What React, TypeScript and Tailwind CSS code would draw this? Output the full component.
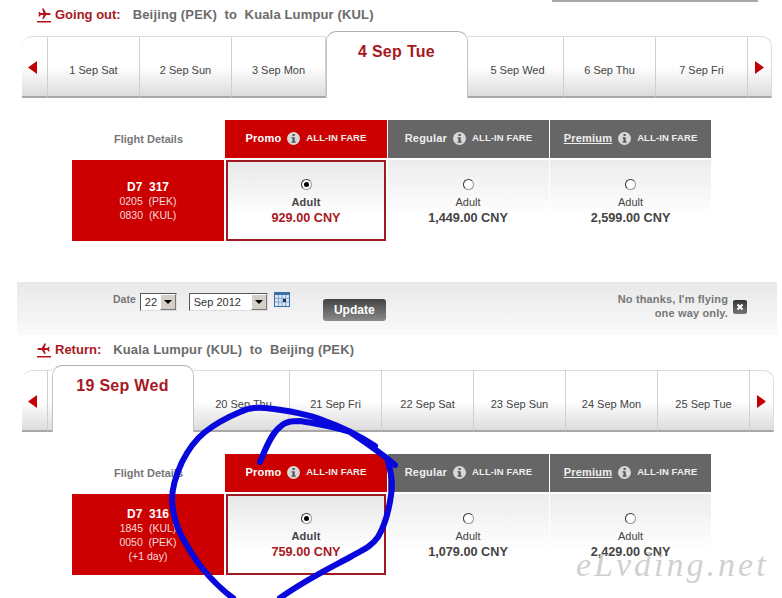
const outDays = [
  { label: "1 Sep Sat", w: "w-[92px]" },
  { label: "2 Sep Sun", w: "w-[92px]" },
  { label: "3 Sep Mon", w: "w-[94px]" },
  { label: "4 Sep Tue", w: "w-[142px]", selected: true },
  { label: "5 Sep Wed", w: "w-[96px]", afterSelected: true },
  { label: "6 Sep Thu", w: "w-[92px]" },
  { label: "7 Sep Fri", w: "w-[92px]" },
];

const returnDays = [
  { label: "19 Sep Wed", w: "w-[142px]", selected: true },
  { label: "20 Sep Thu", w: "w-[96px]", afterSelected: true },
  { label: "21 Sep Fri", w: "w-[92px]" },
  { label: "22 Sep Sat", w: "w-[92px]" },
  { label: "23 Sep Sun", w: "w-[92px]" },
  { label: "24 Sep Mon", w: "w-[92px]" },
  { label: "25 Sep Tue", w: "w-[92px]" },
];

function PlaneIcon({ flip }: { flip?: boolean }) {
  return (
    <svg width="14" height="15" viewBox="0 0 14 15" className={flip ? "-scale-x-100" : ""}>
      <path d="M5 0.5h1.6l2.6 4.6h3c1 0 1.5 .5 1.5 1s-.5 1-1.5 1h-3l-2.6 4h-1.3l1.2-4H3.700l-1.100 1.300H1.300l.7-2.300-.7-2.200h1.300l1.100 1.200h2.800z" fill="#b5121b" />
      <rect x="0" y="13" width="14" height="1.500" fill="#b5121b" />
    </svg>
  );
}

function RouteTitle({ label, route, flip }: { label: string; route: string; flip?: boolean }) {
  return (
    <div className="flex h-[20px] items-center pl-[37px]">
      <PlaneIcon flip={flip} />
      <span className="ml-[4px] text-[13px] font-bold text-[#a81822]">{label}</span>
      <span className="ml-[12px] whitespace-pre text-[13px] font-bold tracking-[0.15px] text-[#6b6b6b]">{route}</span>
    </div>
  );
}

function Arrow({ dir }: { dir: "left" | "right" }) {
  return (
    <svg width="9" height="13" viewBox="0 0 9 13">
      <path d={dir === "left" ? "M9 0v13L0 6.500z" : "M0 0v13l9-6.500z"} fill="#c40000" />
    </svg>
  );
}

type Day = { label: string; w: string; selected?: boolean; afterSelected?: boolean };

function DayStrip({ days, wide, gapBefore }: { days: Day[]; wide: string; gapBefore?: boolean }) {
  return (
    <div className={`ml-[22px] flex h-[67px] items-end ${wide}`}>
      <div className="flex h-[62px] w-[26px] items-center justify-center rounded-tl-[10px] border-r border-t border-b-2 border-r-[#cfcfcf] border-t-[#dddddd] border-b-[#a8a8a8] bg-gradient-to-b from-white from-50% to-[#dcdcdc] pr-[5px] pt-[2px]">
        <Arrow dir="left" />
      </div>
      {gapBefore && <div className="h-[62px] w-[4px] border-t border-b-2 border-t-[#dddddd] border-b-[#a8a8a8] bg-gradient-to-b from-white from-50% to-[#dcdcdc]" />}
      {days.map((d) =>
        d.selected ? (
          <div key={d.label} className={`${d.w} z-10 h-[67px] shrink-0 rounded-t-[10px] border-x border-t border-x-[#c4c4c4] border-t-[#b0b0b0] bg-white pt-[11px] pr-[1px] text-center text-[16px] font-bold leading-[18px] tracking-[0.3px] text-[#a81822]`}>
            {d.label}
          </div>
        ) : (
          <div key={d.label} className={`${d.w} flex h-[62px] shrink-0 items-center justify-center border-r border-t border-b-2 border-r-[#cfcfcf] border-t-[#dddddd] border-b-[#a8a8a8] bg-gradient-to-b from-white from-50% to-[#dcdcdc] pt-[7px] text-[11px] text-[#444444] ${d.afterSelected ? "pl-[4px]" : ""}`}>
            {d.label}
          </div>
        )
      )}
      <div className="flex h-[62px] flex-1 items-center justify-center rounded-tr-[10px] border-r border-t border-b-2 border-r-[#dddddd] border-t-[#dddddd] border-b-[#a8a8a8] bg-gradient-to-b from-white from-50% to-[#dcdcdc] pt-[2px]">
        <Arrow dir="right" />
      </div>
    </div>
  );
}

function InfoIcon() {
  return (
    <svg width="13" height="13" viewBox="0 0 13 13" className="mx-[6px] shrink-0">
      <circle cx="6.500" cy="6.500" r="6.500" fill="#d8d8d8" />
      <rect x="5.500" y="2" width="2.200" height="2" fill="#555555" />
      <path d="M4.500 5.200h3.200v4.300h1v1.300H4.500V9.500h1V6.500h-1z" fill="#555555" />
    </svg>
  );
}

function FareHead({ name, red, underline, last }: { name: string; red?: boolean; underline?: boolean; last?: boolean }) {
  return (
    <div className={`flex items-center justify-center pb-[1px] ${red ? "bg-[#cc0000]" : "bg-[#666666]"} ${last ? "" : "border-r border-white"}`}>
      <span className={`text-[11px] font-bold tracking-[0.2px] ${red ? "text-white" : "text-[#eeeeee]"} ${underline ? "underline" : ""}`}>{name}</span>
      <InfoIcon />
      <span className="text-[9.500px] font-bold tracking-[0.1px] text-[#eeeeee]">ALL-IN FARE</span>
    </div>
  );
}

function Radio({ checked }: { checked?: boolean }) {
  return (
    <div className="flex h-[11px] w-[11px] items-center justify-center rounded-full border border-[#999999] border-l-[#333333] border-t-[#333333] bg-white">
      {checked && <div className="h-[5px] w-[5px] rounded-full bg-black" />}
    </div>
  );
}

function FareCell({ price, selected, last }: { price: string; selected?: boolean; last?: boolean }) {
  if (selected) {
    return (
      <div className="border-r-2 border-l border-white">
        <div className="flex h-[81px] flex-col items-center border-2 border-[#a01820] bg-gradient-to-b from-[#e8e8e8] to-white to-70% pt-[17px]">
          <Radio checked />
          <div className="mt-[5px] text-[11px] font-bold leading-[14px] tracking-[0.2px] text-[#444444]">Adult</div>
          <div className="mt-[1px] text-[12.700px] font-bold leading-[16px] text-[#a81822]">{price}</div>
        </div>
      </div>
    );
  }
  return (
    <div className={`flex h-[81px] flex-col items-center bg-gradient-to-b from-[#ececec] to-white to-70% pt-[19px] ${last ? "" : "border-r border-white pr-[1px]"}`}>
      <Radio />
      <div className="mt-[5px] text-[11px] leading-[14px] text-[#444444]">Adult</div>
      <div className="mt-[1px] text-[12.700px] font-bold leading-[16px] text-[#444444]">{price}</div>
    </div>
  );
}

function FareTable({ flight, lines, prices }: { flight: string; lines: string[]; prices: string[] }) {
  return (
    <div className="ml-[72px] mt-[22px] grid w-[639px] grid-cols-[153px_163px_162px_161px] grid-rows-[38px_auto] gap-y-[2px]">
      <div className="flex items-center justify-center text-[11px] font-bold text-[#777777]">Flight Details</div>
      <FareHead name="Promo" red />
      <FareHead name="Regular" />
      <FareHead name="Premium" underline last />
      <div className="mr-[1px] flex h-[81px] flex-col items-center justify-center bg-[#cc0000] text-[10.500px] leading-[14px] text-[#f6dcdc]">
        <div className="whitespace-pre text-[12px] font-bold text-white">{flight}</div>
        {lines.map((l) => (
          <div key={l} className="whitespace-pre">{l}</div>
        ))}
      </div>
      <FareCell price={prices[0]} selected />
      <FareCell price={prices[1]} />
      <FareCell price={prices[2]} last />
    </div>
  );
}

function FakeSelect({ value, w }: { value: string; w: string }) {
  return (
    <div className={`${w} flex h-[18px] items-center justify-between border border-[#555555] border-b-[#dddddd] border-r-[#dddddd] bg-white pl-[4px] text-[11px] text-[#333333]`}>
      {value}
      <div className="flex h-[16px] w-[16px] items-center justify-center border border-[#ffffff] border-b-[#777777] border-r-[#777777] bg-[#d4d0c8]">
        <div className="h-0 w-0 border-x-[4px] border-t-[4px] border-x-transparent border-t-black" />
      </div>
    </div>
  );
}

function CalendarIcon() {
  return (
    <svg width="16" height="15" viewBox="0 0 16 15" className="ml-[6px]">
      <rect width="16" height="15" fill="#3c6fa8" />
      <rect x="1" y="3" width="14" height="11" fill="#dbe8f4" />
      <path d="M4.500 3v11M8 3v11M11.500 3v11M1 6.500h14M1 10h14" stroke="#7fa6cc" strokeWidth="1" />
      <rect x="9" y="7" width="3" height="3" fill="#1c2f50" />
    </svg>
  );
}

function DateBand() {
  return (
    <div className="ml-[17px] mt-[41px] flex h-[53px] w-[760px] items-start bg-gradient-to-b from-[#e8e8e8] to-[#fafafa] pl-[96px] pr-[30px]">
      <span className="mr-[4px] mt-[10px] text-[10.500px] font-bold leading-[14px] text-[#777777]">Date</span>
      <div className="mt-[11px]"><FakeSelect value="22" w="w-[37px]" /></div>
      <div className="ml-[12px] mt-[11px]"><FakeSelect value="Sep 2012" w="w-[79px]" /></div>
      <div className="mt-[10px]"><CalendarIcon /></div>
      <button className="ml-[33px] mt-[17px] h-[22px] w-[63px] rounded-[3px] bg-gradient-to-b from-[#444444] to-[#8a8a8a] text-[12px] font-bold text-white">
        Update
      </button>
      <div className="ml-auto mt-[10px] text-right text-[11px] font-bold leading-[14px] tracking-[0.15px] text-[#777777]">
        No thanks, I'm flying
        <br />
        one way only.
      </div>
      <div className="ml-[5px] mt-[18px] flex h-[14px] w-[14px] items-center justify-center rounded-[2px] bg-gradient-to-b from-[#333333] to-[#777777]">
        <svg width="8" height="8" viewBox="0 0 8 8">
          <path d="M1.500 1.500l5 5M6.500 1.500l-5 5" stroke="white" strokeWidth="2" />
        </svg>
      </div>
    </div>
  );
}

export default function App() {
  return (
    <div className="relative h-[598px] w-[782px] overflow-hidden bg-white font-['Liberation_Sans',Arial,sans-serif]">
      <div className="ml-[552px] h-[2px] w-[206px] bg-[#a8a8a8]" />
      <div className="mt-[3px]">
        <RouteTitle label="Going out:" route={"Beijing (PEK)  to  Kuala Lumpur (KUL)"} />
      </div>
      <div className="mt-[6px]">
        <DayStrip days={outDays} wide="w-[750px]" />
      </div>
      <FareTable flight="D7  317" lines={["0205  (PEK)", "0830  (KUL)"]} prices={["929.00 CNY", "1,449.00 CNY", "2,599.00 CNY"]} />
      <DateBand />
      <div className="mt-[5px]">
        <RouteTitle label="Return:" route={"Kuala Lumpur (KUL)  to  Beijing (PEK)"} flip />
      </div>
      <div className="mt-[5px]">
        <DayStrip days={returnDays} wide="w-[752px]" gapBefore />
      </div>
      <FareTable flight="D7  316" lines={["1845  (KUL)", "0050  (PEK)", "(+1 day)"]} prices={["759.00 CNY", "1,079.00 CNY", "2,429.00 CNY"]} />

      {/* scribble and watermark sit on top of the screenshot */}
      <svg width="782" height="598" viewBox="0 0 782 598" className="pointer-events-none absolute left-0 top-0 z-20" fill="none">
        <path
          d="M260 462 C266 447 272 433 280 427 C286 421 292 421 300 421 C320 424 338 428 350 432 C365 442 380 452 395 465 M388 462 C392 475 393 485 391 495 C389 510 385 525 378 537 C370 548 362 550 352 556 C330 568 305 580 280 598 M375 446 C360 436 345 428 325 421 C305 413 285 410 265 408 C255 407 248 408 240 412 C228 417 215 424 205 432 C195 440 188 450 182 462 C176 475 172 488 172 500 C173 515 176 525 181 535 C188 548 194 558 202 568 C212 580 222 590 233 598"
          stroke="#0808dc"
          strokeWidth="6"
          strokeLinecap="round"
          strokeLinejoin="round"
        />
      </svg>
      <div className="pointer-events-none absolute left-[576px] top-[545px] z-20 font-['Liberation_Serif',serif] text-[34px] italic leading-[40px] tracking-[3px] text-[#bbbbbb]/70">
        eLvding.net
      </div>
    </div>
  );
}
